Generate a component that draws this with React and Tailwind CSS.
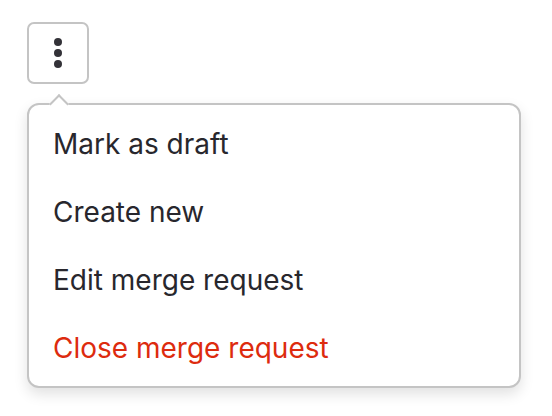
const items = [
    { label: "Mark as draft" },
    { label: "Create new" },
    { label: "Edit merge request" },
    { label: "Close merge request", danger: true },
]

const App = () => {
    return (
        <div
            className="w-[552px] h-[416px] bg-white pl-[27px] pt-[22px]"
            style={{ fontFamily: "Inter, 'Noto Sans', sans-serif" }}
        >
            {/* toggle button */}
            <button
                type="button"
                className="w-[62px] h-[62px] flex flex-col items-center justify-center gap-[3px] border-2 border-[#c4c4c4] rounded-[7px] bg-white"
            >
                <span className="w-[8px] h-[8px] rounded-full bg-[#333238]" />
                <span className="w-[8px] h-[8px] rounded-full bg-[#333238]" />
                <span className="w-[8px] h-[8px] rounded-full bg-[#333238]" />
            </button>

            {/* dropdown panel */}
            <div className="relative mt-[19px] w-[494px] h-[285px] bg-white border-2 border-[#c4c4c4] rounded-[12px] shadow-[0_6px_14px_rgba(0,0,0,0.12)] py-[5px]">
                <div className="absolute left-[23px] -top-[8px] w-[14px] h-[14px] rotate-45 bg-white border-l-2 border-t-2 border-[#c4c4c4]" />
                <ul className="flex flex-col">
                    {items.map((item) => (
                        <li
                            key={item.label}
                            className={`h-[68px] flex items-center pl-[24px] text-[28px] ${
                                item.danger ? "text-[#dd2b0e]" : "text-[#28272d]"
                            }`}
                        >
                            {item.label}
                        </li>
                    ))}
                </ul>
            </div>
        </div>
    )
}

export default App
